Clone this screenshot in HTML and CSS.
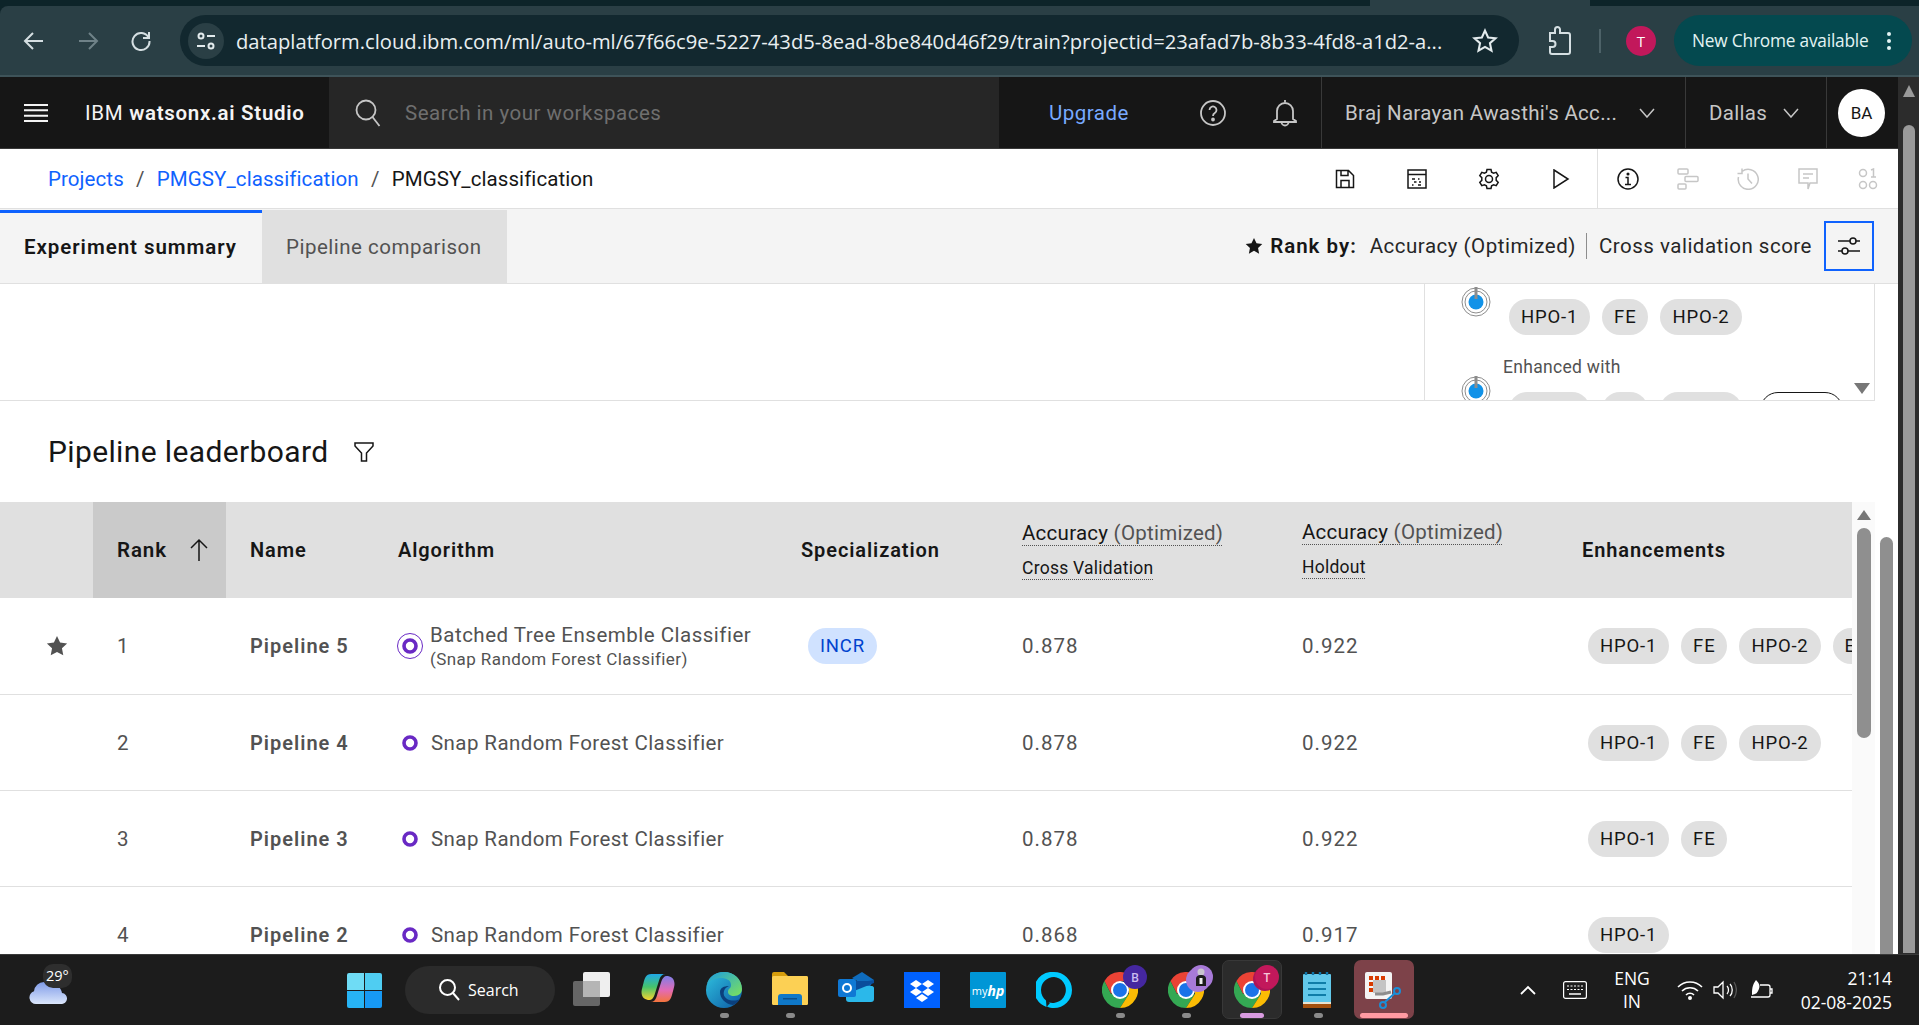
FILE: index.html
```html
<!DOCTYPE html>
<html lang="en">
<head>
    <meta charset="UTF-8">
    <meta name="viewport" content="width=device-width, initial-scale=1.0">
    <title>IBM watsonx.ai Studio - Pipeline leaderboard</title>
    <link rel="stylesheet" href="styles.css">
</head>
<body>

<svg class="defs" width="0" height="0">
    <defs>
        <symbol id="chrome" viewBox="0 0 36 36">
            <path fill="#ea4335" d="M2.4 9A18 18 0 0 1 33.6 9L18 9 9 22z"/>
            <path fill="#34a853" d="M2.4 9A18 18 0 0 0 18 36l9-14L9 22z"/>
            <path fill="#fbbc04" d="M33.6 9A18 18 0 0 1 18 36l9-14V9z"/>
            <circle cx="18" cy="18" r="9" fill="#fff"/>
            <circle cx="18" cy="18" r="7" fill="#1a73e8"/>
        </symbol>
        <symbol id="chip-star" viewBox="0 0 20 20">
            <path d="M10 1l2.8 5.9 6.4.8-4.7 4.4 1.2 6.4L10 15.4l-5.7 3.1 1.2-6.4L.8 7.7l6.4-.8z"/>
        </symbol>
        <symbol id="algo-dot" viewBox="0 0 18 18">
            <circle cx="9" cy="9" r="6" fill="none" stroke="#6929c4" stroke-width="3.6"/>
        </symbol>
        <symbol id="node" viewBox="0 0 30 32">
            <circle cx="15" cy="17" r="14" fill="none" stroke="#8d8d8d"/>
            <circle cx="15" cy="17" r="11" fill="none" stroke="#8d8d8d"/>
            <circle cx="15" cy="17" r="7.5" fill="#1192e8"/>
            <path d="M15 2v12" stroke="#8d8d8d" stroke-width="3"/>
        </symbol>
        <linearGradient id="edge-a" x1="0" y1="0" x2="1" y2="1">
            <stop offset="0" stop-color="#2fc2df"/>
            <stop offset="1" stop-color="#0c59a4"/>
        </linearGradient>
        <linearGradient id="edge-b" x1="0" y1="0" x2="1" y2="1">
            <stop offset="0" stop-color="#1b9de2"/>
            <stop offset="1" stop-color="#7de25a"/>
        </linearGradient>
        <linearGradient id="pilot-a" x1="0" y1="0" x2="0" y2="1">
            <stop offset="0" stop-color="#7f7fe8"/>
            <stop offset=".55" stop-color="#e36bb4"/>
            <stop offset="1" stop-color="#f4743c"/>
        </linearGradient>
        <linearGradient id="pilot-b" x1="0" y1="0" x2="0" y2="1">
            <stop offset="0" stop-color="#1fa8e8"/>
            <stop offset=".5" stop-color="#46c46b"/>
            <stop offset="1" stop-color="#f7d32f"/>
        </linearGradient>
        <linearGradient id="cloud-fill" x1="0" y1="0" x2="0" y2="1">
            <stop offset="0" stop-color="#7f9be8"/>
            <stop offset="1" stop-color="#dbe6fb"/>
        </linearGradient>
    </defs>
</svg>

<div class="browser-bar">
    <div class="tab-strip"><div class="tab-active"></div></div>
    <div class="toolbar">
        <svg class="tool-icon" width="22" height="22" viewBox="0 0 22 22" fill="none" stroke="#d5dfe2" stroke-width="2"><path d="M20 11H3M10 3l-8 8 8 8"/></svg>
        <svg class="tool-icon tool-fwd" width="22" height="22" viewBox="0 0 22 22" fill="none" stroke="#6f8288" stroke-width="2"><path d="M2 11h17M12 3l8 8-8 8"/></svg>
        <svg class="tool-icon tool-reload" width="22" height="22" viewBox="0 0 22 22" fill="none" stroke="#d5dfe2" stroke-width="2"><path d="M18.500 7.500A8.500 8.500 0 1 0 19.500 11M19 2v6h-6"/></svg>
        <div class="omnibox">
            <div class="site-info">
                <svg width="22" height="22" viewBox="0 0 22 22" fill="none" stroke="#e3ebed" stroke-width="2"><circle cx="6" cy="6" r="2.500"/><path d="M12 6h8M2 16h8"/><circle cx="16" cy="16" r="2.500"/></svg>
            </div>
            <span class="url">dataplatform.cloud.ibm.com/ml/auto-ml/67f66c9e-5227-43d5-8ead-8be840d46f29/train?projectid=23afad7b-8b33-4fd8-a1d2-a...</span>
            <svg class="url-star" width="26" height="26" viewBox="0 0 20 20" fill="none" stroke="#e3ebed" stroke-width="1.600"><path d="M10 2l2.400 5.300 5.700.6-4.300 3.800 1.200 5.700L10 14.500l-5 2.900 1.200-5.700L1.900 7.900l5.700-.6z"/></svg>
        </div>
        <svg class="ext-icon" width="26" height="30" viewBox="0 0 26 30" fill="none" stroke="#d5dfe2" stroke-width="2"><path d="M3 7h5V3.500a2.500 2.500 0 0 1 5 0V7h8a2 2 0 0 1 2 2v17a2 2 0 0 1-2 2H5a2 2 0 0 1-2-2v-5h2.500a3 3 0 0 0 0-6H3z"/></svg>
        <div class="tool-sep"></div>
        <div class="profile-dot">T</div>
        <div class="update-pill">
            <span>New Chrome available</span>
            <span class="update-dots"><i></i><i></i><i></i></span>
        </div>
    </div>
</div>

<div class="app">
    <div class="content">
        <header class="studio-head">
            <div class="head-brand">
                <svg width="24" height="18" viewBox="0 0 24 18" fill="none" stroke="#f4f4f4" stroke-width="2"><path d="M0 1h24M0 6.300h24M0 11.700h24M0 17h24"/></svg>
                <span class="brand-name">IBM <b>watsonx.ai Studio</b></span>
            </div>
            <div class="head-search">
                <svg width="26" height="28" viewBox="0 0 26 28" fill="none" stroke="#c6c6c6" stroke-width="1.800"><circle cx="11" cy="11" r="9.500"/><path d="M17.500 18l7 9"/></svg>
                <span>Search in your workspaces</span>
            </div>
            <div class="head-upgrade">Upgrade</div>
            <div class="head-icon">
                <svg width="26" height="26" viewBox="0 0 26 26" fill="none" stroke="#c6c6c6" stroke-width="1.800"><circle cx="13" cy="13" r="12"/><path d="M9.500 10a3.500 3.500 0 1 1 5.300 3c-1.200.7-1.800 1.300-1.800 3"/><circle cx="13" cy="19.500" r="1" fill="#c6c6c6"/></svg>
            </div>
            <div class="head-icon">
                <svg width="26" height="28" viewBox="0 0 26 28" fill="none" stroke="#c6c6c6" stroke-width="1.800"><path d="M13 1v2M5 20v-8a8 8 0 0 1 16 0v8l3 2v1H2v-1zM9.500 23a3.500 3.500 0 0 0 7 0"/></svg>
            </div>
            <div class="head-account">
                <span>Braj Narayan Awasthi's Acc...</span>
                <svg class="chev" width="16" height="10" viewBox="0 0 16 10" fill="none" stroke="#c6c6c6" stroke-width="1.500"><path d="M1 1l7 8 7-8"/></svg>
            </div>
            <div class="head-region">
                <span>Dallas</span>
                <svg class="chev" width="16" height="10" viewBox="0 0 16 10" fill="none" stroke="#c6c6c6" stroke-width="1.500"><path d="M1 1l7 8 7-8"/></svg>
            </div>
            <div class="head-user"><div class="user-avatar">BA</div></div>
        </header>

        <div class="crumb-bar">
            <nav class="crumbs">
                <a>Projects</a><span class="crumb-sep">/</span>
                <a>PMGSY_classification</a><span class="crumb-sep">/</span>
                <span>PMGSY_classification</span>
            </nav>
            <div class="crumb-actions">
                <div class="act">
                    <svg width="20" height="20" viewBox="0 0 20 20" fill="none" stroke="#161616" stroke-width="1.500"><path d="M1.500 1.500h12l5 5v12h-17zM6 1.500v5h7v-5M6 18.500v-7h8v7"/></svg>
                </div>
                <div class="act">
                    <svg width="20" height="20" viewBox="0 0 20 20" fill="none" stroke="#161616" stroke-width="1.500"><rect x="1" y="1" width="18" height="18"/><path d="M1 5.500h18M5 10h3M11 10h1.500M7 13h2.500M12 13h2M5 16h1.500M11 16h3"/></svg>
                </div>
                <div class="act">
                    <svg width="22" height="22" viewBox="0 0 22 22" fill="none" stroke="#161616" stroke-width="1.500"><circle cx="11" cy="11" r="3.500"/><path d="M9 1.500h4l.6 2.700 2 1 2.600-.9 2 3.400-2 1.900v2.800l2 1.900-2 3.400-2.600-.9-2 1L13 20.500H9l-.6-2.700-2-1-2.600.9-2-3.400 2-1.900V9.600l-2-1.900 2-3.400 2.600.9 2-1z"/></svg>
                </div>
                <div class="act">
                    <svg width="18" height="20" viewBox="0 0 18 20" fill="none" stroke="#161616" stroke-width="1.500"><path d="M2 1l14 9-14 9z"/></svg>
                </div>
                <div class="act-group">
                    <div class="act-small">
                        <svg width="22" height="22" viewBox="0 0 22 22" fill="none" stroke="#161616" stroke-width="1.500"><circle cx="11" cy="11" r="10"/><path d="M8 16.500h6M11 16.500V9.500H8.500"/><circle cx="11" cy="6" r=".8" fill="#161616"/></svg>
                    </div>
                    <div class="act-small act-off">
                        <svg width="22" height="22" viewBox="0 0 22 22" fill="none" stroke="#c6c6c6" stroke-width="1.500"><rect x="1" y="1" width="10" height="5" rx="1"/><rect x="8" y="8.500" width="13" height="5" rx="1"/><rect x="1" y="16" width="8" height="5" rx="1"/></svg>
                    </div>
                    <div class="act-small act-off">
                        <svg width="22" height="22" viewBox="0 0 22 22" fill="none" stroke="#c6c6c6" stroke-width="1.500"><path d="M5 3.500A10 10 0 1 1 1.500 9M5 .5v5H.5M11 5.500V11l4 4.500"/></svg>
                    </div>
                    <div class="act-small act-off">
                        <svg width="22" height="22" viewBox="0 0 22 22" fill="none" stroke="#c6c6c6" stroke-width="1.500"><path d="M2 1h18v14h-7l-2 6v-6H2zM6 6h10M6 10h6"/></svg>
                    </div>
                    <div class="act-small act-off">
                        <svg width="20" height="22" viewBox="0 0 20 22" fill="none" stroke="#c6c6c6" stroke-width="1.500"><circle cx="5" cy="5" r="3.500"/><circle cx="5" cy="17" r="3.500"/><circle cx="15" cy="17" r="3.500"/><path d="M13 2l2.500-1v8M13 9h5"/></svg>
                    </div>
                </div>
            </div>
        </div>

        <div class="tab-row">
            <div class="page-tab page-tab-on">Experiment summary</div>
            <div class="page-tab page-tab-off">Pipeline comparison</div>
            <div class="rank-by">
                <svg class="rank-star" width="18" height="18"><use href="#chip-star"/></svg>
                <b>Rank by:</b>
                <span class="rank-val">Accuracy (Optimized)</span>
                <span class="rank-val rank-val-cv">Cross validation score</span>
                <button class="rank-btn">
                    <svg width="24" height="22" viewBox="0 0 24 22" fill="none" stroke="#161616" stroke-width="1.500"><path d="M1 6h12M19 6h4M1 16h4M11 16h12"/><circle cx="16" cy="6" r="3"/><circle cx="8" cy="16" r="3"/></svg>
                </button>
            </div>
        </div>

        <section class="progress-area">
            <div class="progress-inner">
                <div class="progress-panel">
                    <div class="node-row">
                        <svg class="node-icon" width="30" height="32"><use href="#node"/></svg>
                        <div class="chip-list">
                            <span class="chip">HPO-1</span><span class="chip">FE</span><span class="chip">HPO-2</span>
                        </div>
                    </div>
                    <div class="node-label">Enhanced with</div>
                    <div class="node-row node-row-last">
                        <svg class="node-icon" width="30" height="32"><use href="#node"/></svg>
                        <div class="chip-list">
                            <span class="chip">HPO-1</span><span class="chip">FE</span><span class="chip">HPO-2</span><span class="chip chip-line">HPO-3</span>
                        </div>
                    </div>
                    <div class="panel-arrow"></div>
                </div>
            </div>
        </section>

        <section class="board">
            <div class="board-title">
                <h2>Pipeline leaderboard</h2>
                <svg width="20" height="22" viewBox="0 0 20 22" fill="none" stroke="#161616" stroke-width="1.500"><path d="M1 2h18v3l-6.500 7v8h-5v-8L1 5z"/></svg>
            </div>
            <div class="board-body">
                <div class="board-table">
                    <div class="tb-row tb-head">
                        <div class="cell cell-star"></div>
                        <div class="cell cell-rank cell-sorted">
                            <span>Rank</span>
                            <svg width="20" height="24" viewBox="0 0 20 24" fill="none" stroke="#161616" stroke-width="1.500"><path d="M10 23V2M2 10l8-8 8 8"/></svg>
                        </div>
                        <div class="cell">Name</div>
                        <div class="cell">Algorithm</div>
                        <div class="cell">Specialization</div>
                        <div class="cell cell-metric">
                            <div class="metric-main"><u>Accuracy <em>(Optimized)</em></u></div>
                            <div class="metric-sub"><u>Cross Validation</u></div>
                        </div>
                        <div class="cell cell-metric">
                            <div class="metric-main"><u>Accuracy <em>(Optimized)</em></u></div>
                            <div class="metric-sub"><u>Holdout</u></div>
                        </div>
                        <div class="cell">Enhancements</div>
                    </div>

                    <div class="tb-row tb-first">
                        <div class="cell cell-star"><svg width="22" height="22"><use href="#chip-star"/></svg></div>
                        <div class="cell cell-rank">1</div>
                        <div class="cell cell-name">Pipeline 5</div>
                        <div class="cell cell-algo">
                            <svg class="algo-ring" width="26" height="26" viewBox="0 0 26 26" fill="none" stroke="#6929c4"><circle cx="13" cy="13" r="12.500"/><circle cx="13" cy="13" r="6" stroke-width="3.600"/></svg>
                            <div class="algo-text">
                                <div>Batched Tree Ensemble Classifier</div>
                                <small>(Snap Random Forest Classifier)</small>
                            </div>
                        </div>
                        <div class="cell"><span class="chip chip-blue">INCR</span></div>
                        <div class="cell cell-num">0.878</div>
                        <div class="cell cell-num">0.922</div>
                        <div class="cell cell-chips"><span class="chip">HPO-1</span><span class="chip">FE</span><span class="chip">HPO-2</span><span class="chip">Ensemble</span></div>
                    </div>

                    <div class="tb-row">
                        <div class="cell cell-star"></div>
                        <div class="cell cell-rank">2</div>
                        <div class="cell cell-name">Pipeline 4</div>
                        <div class="cell cell-algo"><svg class="algo-dot" width="18" height="18"><use href="#algo-dot"/></svg><span>Snap Random Forest Classifier</span></div>
                        <div class="cell"></div>
                        <div class="cell cell-num">0.878</div>
                        <div class="cell cell-num">0.922</div>
                        <div class="cell cell-chips"><span class="chip">HPO-1</span><span class="chip">FE</span><span class="chip">HPO-2</span></div>
                    </div>

                    <div class="tb-row">
                        <div class="cell cell-star"></div>
                        <div class="cell cell-rank">3</div>
                        <div class="cell cell-name">Pipeline 3</div>
                        <div class="cell cell-algo"><svg class="algo-dot" width="18" height="18"><use href="#algo-dot"/></svg><span>Snap Random Forest Classifier</span></div>
                        <div class="cell"></div>
                        <div class="cell cell-num">0.878</div>
                        <div class="cell cell-num">0.922</div>
                        <div class="cell cell-chips"><span class="chip">HPO-1</span><span class="chip">FE</span></div>
                    </div>

                    <div class="tb-row">
                        <div class="cell cell-star"></div>
                        <div class="cell cell-rank">4</div>
                        <div class="cell cell-name">Pipeline 2</div>
                        <div class="cell cell-algo"><svg class="algo-dot" width="18" height="18"><use href="#algo-dot"/></svg><span>Snap Random Forest Classifier</span></div>
                        <div class="cell"></div>
                        <div class="cell cell-num">0.868</div>
                        <div class="cell cell-num">0.917</div>
                        <div class="cell cell-chips"><span class="chip">HPO-1</span></div>
                    </div>
                </div>
                <div class="table-scroll">
                    <div class="scroll-up"></div>
                    <div class="scroll-thumb"></div>
                </div>
                <div class="board-scroll"><div class="scroll-thumb"></div></div>
            </div>
        </section>
    </div>

    <div class="page-scroll">
        <div class="page-scroll-up"></div>
        <div class="page-scroll-thumb"></div>
    </div>
</div>

<footer class="taskbar">
    <div class="weather">
        <svg width="38" height="26" viewBox="0 0 38 26"><path fill="url(#cloud-fill)" d="M7 26a6.500 6.500 0 0 1-2-12.700A10 10 0 0 1 15 4c2 0 5 1 6 3 6-1 11 2 12 8a5.500 5.500 0 0 1-1 11z"/></svg>
        <span class="temp">29°</span>
    </div>
    <div class="win-logo"><i></i><i></i><i></i><i></i></div>
    <div class="task-search">
        <svg width="22" height="24" viewBox="0 0 22 24" fill="none" stroke="#fff" stroke-width="2"><circle cx="9.500" cy="9.500" r="7.500"/><path d="M15 15l6 7"/></svg>
        <span>Search</span>
    </div>
    <div class="task">
        <svg width="38" height="36" viewBox="0 0 38 36"><rect x="10" y="0" width="27" height="25" rx="2" fill="#efefef"/><rect x="0" y="9" width="27" height="25" rx="2" fill="#666"/><rect x="10" y="9" width="17" height="16" fill="#b5b5b5"/></svg>
    </div>
    <div class="task">
        <svg width="34" height="32" viewBox="0 0 33 32"><path fill="url(#pilot-b)" d="M10 2C4 2 3 7 2 11 1 15 0 18 0 20c0 6 4 8 8 8 2 0 4-2 5-5L18 7c1-3 3-5 6-5z"/><path fill="url(#pilot-a)" d="M23 30c6 0 7-5 8-9 1-4 2-7 2-9 0-6-4-8-8-8-2 0-4 2-5 5L15 25c-1 3-3 5-6 5z"/></svg>
    </div>
    <div class="task">
        <svg width="36" height="36" viewBox="0 0 36 36"><circle cx="18" cy="18" r="18" fill="url(#edge-a)"/><path fill="url(#edge-b)" d="M1 12C3 4 10 0 18 0c10 0 18 7 18 17 0 4-3 7-8 7-4 0-6-2-6-4 0-4 3-3 3-7C25 8 20 6 15 6 9 6 4 8 1 12z"/><path fill="#0b3f7c" d="M14 20c0 6 5 12 13 13 3-1 5-3 7-6-4 2-9 2-13 0-3-2-4-5-3-8 1-3 3-4 5-5-5 0-9 2-9 6z"/></svg>
        <i class="dot"></i>
    </div>
    <div class="task">
        <svg width="36" height="34" viewBox="0 0 36 34"><path fill="#d69d0c" d="M0 2a2 2 0 0 1 2-2h10l4 4h18a2 2 0 0 1 2 2v4H0z"/><rect y="4" width="36" height="29" rx="1.500" fill="#fcd054"/><path fill="#0f78c8" d="M6 33V25a3 3 0 0 1 3-3h18a3 3 0 0 1 3 3v8z"/><rect x="11" y="26" width="14" height="1.500" fill="#0a4f8c"/></svg>
        <i class="dot"></i>
    </div>
    <div class="task">
        <svg width="36" height="30" viewBox="0 0 36 30"><path fill="#0f6cbd" d="M14 6L24 0l12 8-5 8z"/><path fill="#2bb8ea" d="M8 14h26c1 0 2 1 2 2v11c0 2-1 3-3 3H11c-2 0-3-1-3-3z"/><path fill="#0a4d9c" d="M14 9l16 0 6-1v3l-20 8z"/><rect y="7" width="18" height="18" rx="2" fill="#0f78d4"/><circle cx="9" cy="16" r="4" fill="none" stroke="#fff" stroke-width="2"/></svg>
    </div>
    <div class="task">
        <svg width="36" height="36" viewBox="0 0 36 36"><rect width="36" height="36" fill="#0061fe"/><path fill="#fff" d="M12 8l6 4-6 4-6-4zM24 8l6 4-6 4-6-4zM12 16l6 4-6 4-6-4zM24 16l6 4-6 4-6-4zM18 22l6 4-6 4-6-4z"/></svg>
    </div>
    <div class="task">
        <div class="myhp">my<b>hp</b></div>
    </div>
    <div class="task">
        <svg width="36" height="36" viewBox="0 0 36 36"><path fill="#00caff" fill-rule="evenodd" d="M18 0a18 18 0 0 1 0 36c-2.500 0-5-.5-7-1.500l3-3.500c-.4-.2-1-.5-1.500-.8A13 13 0 1 0 18 5 13 13 0 0 0 5 18c0 4.500 2 8 5 10.500l.5 6.500A18 18 0 0 1 18 0z"/></svg>
    </div>
    <div class="task task-chrome">
        <svg width="36" height="36"><use href="#chrome"/></svg>
        <span class="profile-badge badge-b">B</span>
        <i class="dot"></i>
    </div>
    <div class="task task-chrome">
        <svg width="36" height="36"><use href="#chrome"/></svg>
        <span class="profile-badge badge-photo">
            <svg width="14" height="18" viewBox="0 0 14 18"><circle cx="7" cy="4" r="3.500" fill="#c9c4cf"/><path fill="#1d1d1d" d="M2 18V11c0-3 2-4 5-4s5 1 5 4v7z"/><rect x="5.500" y="10" width="3" height="6" fill="#eee"/></svg>
        </span>
        <i class="dot"></i>
    </div>
    <div class="task task-chrome task-open">
        <svg width="36" height="36"><use href="#chrome"/></svg>
        <span class="profile-badge badge-t">T</span>
        <i class="bar bar-pink"></i>
    </div>
    <div class="task">
        <svg width="30" height="36" viewBox="0 0 30 36"><rect y="2" width="28" height="30" rx="1" fill="#62c8ea"/><rect y="30" width="28" height="6" fill="#a4500e"/><rect y="30" width="28" height="2" fill="#e8e2d0"/><path d="M3 3V0M10 3V0M17 3V0M24 3V0" stroke="#1075a8" stroke-width="2.400"/><path d="M5 11h18M5 17h18M5 23h18" stroke="#0f7da8" stroke-width="2"/></svg>
        <i class="dot"></i>
    </div>
    <div class="task task-snip">
        <svg width="38" height="38" viewBox="0 0 38 38"><rect x="0" y="0" width="27" height="27" rx="2" fill="#f4f4f4"/><path fill="#d83b01" d="M4 4h4v4H4zM10 4h4v4h-4zM16 4h4v4h-4zM4 10h4v4H4zM4 16h4v4H4z"/><rect x="8" y="8" width="13" height="13" fill="#c4c4c4"/><path d="M10 22h8l8-2" stroke="#8d8d8d" stroke-width="3" fill="none"/><circle cx="32" cy="19" r="3" fill="none" stroke="#1a8fd8" stroke-width="2"/><circle cx="18" cy="33" r="3" fill="none" stroke="#1a8fd8" stroke-width="2"/><path d="M20 30l10-9" stroke="#1a8fd8" stroke-width="2"/></svg>
        <i class="bar bar-rose"></i>
    </div>

    <div class="tray">
        <svg class="tray-caret" width="16" height="10" viewBox="0 0 16 10" fill="none" stroke="#fff" stroke-width="1.800"><path d="M1 9l7-7 7 7"/></svg>
        <svg class="tray-keys" width="24" height="18" viewBox="0 0 24 18" fill="none" stroke="#fff" stroke-width="1.200"><rect x=".6" y=".6" width="22.800" height="16.800" rx="2"/><path d="M4 5h16M4 8.500h16" stroke-dasharray="2 1.500"/><path d="M6 13h12" stroke-width="1.500"/></svg>
        <div class="tray-lang"><div>ENG</div><div>IN</div></div>
        <svg class="tray-wifi" width="26" height="20" viewBox="0 0 26 20" fill="none" stroke="#fff" stroke-width="1.600"><path d="M1 7a17 17 0 0 1 24 0M5 11a11.500 11.500 0 0 1 16 0M9 15a5.500 5.500 0 0 1 8 0"/><circle cx="13" cy="18" r="1.200" fill="#fff"/></svg>
        <svg class="tray-sound" width="24" height="20" viewBox="0 0 24 20" fill="none" stroke="#fff" stroke-width="1.300"><path d="M1 7h4l5-5v16l-5-5H1zM14 6c2 2 2 6 0 8M17 4c3 3 3 9 0 12"/><path d="M21 2c3 5 3 11 0 16" stroke="#555"/></svg>
        <svg class="tray-batt" width="24" height="22" viewBox="0 0 24 22" fill="none" stroke="#fff" stroke-width="1.300"><path d="M11 6h8a2 2 0 0 1 2 2v8a2 2 0 0 1-2 2H2M21 10h2v4h-2"/><path fill="#fff" d="M7 1c3 3 5 6 2 11-1 2-2 3-6 4 0-5 0-10 4-15z" stroke="none"/></svg>
        <div class="tray-clock"><div>21:14</div><div>02-08-2025</div></div>
    </div>
</footer>

</body>
</html>
```

FILE: styles.css
```css
* {
    box-sizing: border-box;
}

html, body {
    margin: 0;
    height: 100%;
    overflow: hidden;
}

body {
    font-family: "Roboto", "Liberation Sans", sans-serif;
    font-size: 20px;
    color: #161616;
    background-color: #ffffff;
    display: flex;
    flex-direction: column;
    height: 1025px;
}

.defs {
    position: absolute;
}

/* browser chrome */
.browser-bar {
    height: 77px;
    flex: none;
    background-color: #0d2429;
    font-family: "Open Sans", "Noto Sans", sans-serif;
}

.tab-strip {
    height: 6px;
}

.tab-active {
    margin-left: 1370px;
    width: 220px;
    height: 6px;
    background-color: #2a3f45;
}

.toolbar {
    height: 71px;
    background-color: #2a3f45;
    border-bottom: 2px solid #3e5359;
    border-top-left-radius: 8px;
    display: flex;
    align-items: center;
}

.tool-icon {
    margin-left: 23px;
}

.tool-fwd {
    margin-left: 32px;
}

.tool-reload {
    margin-left: 31px;
}

.omnibox {
    margin-left: 28px;
    width: 1339px;
    height: 51px;
    background-color: #12282f;
    border-radius: 26px;
    display: flex;
    align-items: center;
    padding-left: 8px;
    color: #e9eff1;
}

.site-info {
    width: 36px;
    height: 36px;
    border-radius: 18px;
    background-color: #2a3f45;
    display: flex;
    align-items: center;
    justify-content: center;
}

.url {
    margin-left: 12px;
    width: 1210px;
    font-size: 20.200px;
    white-space: nowrap;
    overflow: hidden;
}

.url-star {
    margin-left: 26px;
    flex: none;
}

.ext-icon {
    margin-left: 28px;
}

.tool-sep {
    margin-left: 26px;
    width: 2px;
    height: 24px;
    background-color: #4d6268;
}

.profile-dot {
    margin-left: 25px;
    width: 30px;
    height: 30px;
    border-radius: 15px;
    background-color: #c2185b;
    color: #fff;
    font-size: 15px;
    display: flex;
    align-items: center;
    justify-content: center;
}

.update-pill {
    margin-left: 18px;
    width: 238px;
    height: 51px;
    border-radius: 26px;
    background-color: #04494f;
    color: #e3f4f4;
    font-size: 17.300px;
    letter-spacing: -.2px;
    display: flex;
    align-items: center;
    justify-content: space-between;
    padding: 0 21px 0 18px;
}

.update-dots {
    display: flex;
    flex-direction: column;
    gap: 3px;
}

.update-dots i {
    width: 4px;
    height: 4px;
    border-radius: 2px;
    background-color: #e3f4f4;
}

/* app area */
.app {
    flex: 1;
    min-height: 0;
    display: flex;
}

.content {
    width: 1898px;
    display: flex;
    flex-direction: column;
    overflow: hidden;
}

.studio-head {
    height: 72px;
    flex: none;
    background-color: #161616;
    border-bottom: 1px solid #393939;
    display: flex;
    align-items: stretch;
    color: #c6c6c6;
}

.head-brand {
    width: 329px;
    padding-left: 24px;
    display: flex;
    align-items: center;
    gap: 37px;
}

.brand-name {
    color: #f4f4f4;
    font-size: 20.500px;
    letter-spacing: .7px;
    white-space: nowrap;
}

.brand-name b {
    font-weight: 600;
}

.head-search {
    width: 670px;
    background-color: #262626;
    padding-left: 26px;
    display: flex;
    align-items: center;
    gap: 24px;
    color: #6f6f6f;
    font-size: 20.500px;
    letter-spacing: .5px;
}

.head-upgrade {
    width: 178px;
    padding-left: 50px;
    color: #78a9ff;
    display: flex;
    align-items: center;
    font-size: 20.500px;
    letter-spacing: .5px;
}

.head-icon {
    width: 72px;
    display: flex;
    align-items: center;
    justify-content: center;
}

.head-account, .head-region {
    display: flex;
    align-items: center;
    border-left: 1px solid #393939;
    padding-left: 23px;
    font-size: 20.500px;
    letter-spacing: .3px;
    white-space: nowrap;
}

.head-account {
    width: 364px;
}

.head-region {
    width: 141px;
}

.head-account .chev {
    margin-left: 22px;
}

.head-region .chev {
    margin-left: 16px;
}

.head-user {
    width: 72px;
    border-left: 1px solid #393939;
    display: flex;
    align-items: center;
    padding-left: 11px;
}

.user-avatar {
    width: 47px;
    height: 48px;
    border-radius: 50%;
    background-color: #ffffff;
    color: #161616;
    font-size: 17px;
    display: flex;
    align-items: center;
    justify-content: center;
}

.crumb-bar {
    height: 60px;
    flex: none;
    border-bottom: 1px solid #e0e0e0;
    display: flex;
    align-items: stretch;
    justify-content: space-between;
}

.crumbs {
    display: flex;
    align-items: center;
    padding-left: 48px;
    font-size: 20.500px;
    letter-spacing: .08px;
}

.crumbs a {
    color: #0f62fe;
}

.crumb-sep {
    width: 33px;
    text-align: center;
    color: #525252;
}

.crumb-actions {
    display: flex;
    align-items: stretch;
}

.act {
    width: 72px;
    display: flex;
    align-items: center;
    justify-content: center;
}

.act-group {
    display: flex;
    border-left: 1px solid #e0e0e0;
}

.act-small {
    width: 60px;
    display: flex;
    align-items: center;
    justify-content: center;
}

.tab-row {
    height: 75px;
    flex: none;
    background-color: #f4f4f4;
    border-bottom: 1px solid #e0e0e0;
    display: flex;
    align-items: stretch;
}

.page-tab {
    display: flex;
    align-items: center;
    font-size: 20.500px;
    margin-top: 1px;
}

.page-tab-on {
    width: 262px;
    padding: 0 0 3px 24px;
    border-top: 3px solid #0f62fe;
    font-weight: 600;
    letter-spacing: .95px;
}

.page-tab-off {
    width: 245px;
    padding-left: 24px;
    background-color: #e0e0e0;
    color: #525252;
    letter-spacing: .5px;
}

.rank-by {
    margin-left: auto;
    padding-right: 24px;
    display: flex;
    align-items: center;
    font-size: 20.500px;
    letter-spacing: .5px;
}

.rank-star {
    fill: #161616;
    margin-right: 7px;
}

.rank-by b {
    font-weight: 600;
    letter-spacing: 1px;
}

.rank-val {
    margin-left: 13px;
    color: #262626;
}

.rank-val-cv {
    margin-left: 10px;
    padding-left: 12px;
    border-left: 1px solid #8d8d8d;
    line-height: 26px;
}

.rank-btn {
    margin-left: 12px;
    width: 50px;
    height: 50px;
    background-color: #f4f4f4;
    border: 2px solid #0f62fe;
    padding: 0;
    display: flex;
    align-items: center;
    justify-content: center;
}

/* top panel with the pipeline map */
.progress-area {
    height: 117px;
    flex: none;
    padding-right: 23px;
}

.progress-inner {
    height: 100%;
    display: flex;
    justify-content: flex-end;
    border-bottom: 1px solid #e0e0e0;
}

.progress-panel {
    position: relative;
    width: 451px;
    overflow: hidden;
    border-left: 1px solid #e0e0e0;
    border-right: 1px solid #e0e0e0;
}

.node-row {
    display: flex;
    padding-left: 36px;
    height: 54px;
}

.node-icon {
    flex: none;
    margin-top: 1px;
}

.chip-list {
    display: flex;
    gap: 12px;
    margin-left: 18px;
    margin-top: 15px;
}

.node-label {
    margin-top: 17px;
    height: 24px;
    line-height: 24px;
    padding-left: 78px;
    font-size: 17.500px;
    letter-spacing: .3px;
    color: #525252;
}

.node-row-last {
    margin-top: -7px;
}

.node-row-last .node-icon {
    margin-top: 2px;
}

.node-row-last .chip-list {
    margin-top: 20px;
}

.panel-arrow {
    position: absolute;
    right: 4px;
    top: 99px;
    width: 0;
    height: 0;
    border-left: 8px solid transparent;
    border-right: 8px solid transparent;
    border-top: 11px solid #777;
}

.chip {
    display: inline-flex;
    align-items: center;
    justify-content: center;
    height: 36px;
    padding: 0 12px;
    border-radius: 18px;
    background-color: #e0e0e0;
    color: #161616;
    font-size: 18.500px;
    letter-spacing: .8px;
    white-space: nowrap;
}

.chip-line {
    background-color: #fff;
    border: 1px solid #161616;
    margin-left: 6px;
}

.chip-blue {
    background-color: #d0e2ff;
    color: #0043ce;
    margin-left: 7px;
}

/* leaderboard */
.board {
    flex: 1;
    min-height: 0;
    display: flex;
    flex-direction: column;
}

.board-title {
    height: 101px;
    flex: none;
    display: flex;
    align-items: center;
    padding-left: 48px;
    gap: 26px;
}

.board-title h2 {
    margin: 0;
    font-size: 30px;
    font-weight: 400;
    letter-spacing: .37px;
}

.board-body {
    flex: 1;
    min-height: 0;
    display: flex;
}

.board-table {
    width: 1852px;
    flex: none;
    overflow: hidden;
}

.tb-row {
    display: grid;
    grid-template-columns: 93px 133px 148px 403px 221px 280px 280px 294px;
    height: 96px;
    border-bottom: 1px solid #e0e0e0;
    color: #525252;
    width: 1852px;
}

.tb-first {
    height: 97px;
}

.tb-head {
    background-color: #e0e0e0;
    color: #161616;
    font-weight: 600;
    letter-spacing: .9px;
    border-bottom: 0;
}

.cell {
    display: flex;
    align-items: center;
    padding-left: 24px;
    min-width: 0;
    white-space: nowrap;
}

.cell-star {
    fill: #525252;
    padding-left: 46px;
}

.cell-sorted {
    background-color: #cacaca;
    gap: 22px;
}

.cell-metric {
    flex-direction: column;
    align-items: flex-start;
    justify-content: center;
    font-weight: 400;
    letter-spacing: .25px;
    padding-bottom: 2px;
}

.cell-metric + .cell-metric {
    padding-bottom: 4px;
}

.metric-main {
    font-size: 20.500px;
    line-height: 28px;
}

.metric-main em {
    font-style: normal;
    color: #525252;
}

.metric-sub {
    font-size: 17.500px;
    line-height: 24px;
    margin-top: 9px;
}

.cell-metric u {
    text-decoration: underline dotted #525252 1px;
    text-underline-offset: 5px;
}

.cell-name {
    font-weight: 600;
    letter-spacing: 1px;
}

.cell-num {
    font-size: 20.500px;
    letter-spacing: 1px;
}

.cell-rank {
    font-size: 20.500px;
}

.cell-algo {
    gap: 9px;
    font-size: 20.500px;
    letter-spacing: .42px;
}

.algo-ring {
    flex: none;
    margin-right: -2px;
    margin-left: -1px;
}

.algo-dot {
    flex: none;
    margin-left: 3px;
    margin-right: 3px;
}

.algo-text div {
    line-height: 25px;
    letter-spacing: .5px;
}

.algo-text small {
    display: block;
    font-size: 17px;
    line-height: 22px;
}

.cell-chips {
    gap: 12px;
    padding-left: 30px;
    overflow: hidden;
}

.table-scroll {
    width: 23px;
    flex: none;
    background-color: #fafafa;
    padding: 8px 4px 0 5px;
}

.scroll-up {
    margin: 0 auto 8px;
    width: 0;
    height: 0;
    border-left: 7px solid transparent;
    border-right: 7px solid transparent;
    border-bottom: 10px solid #777;
}

.scroll-thumb {
    background-color: #8f8f8f;
    border-radius: 7px 7px 0 0;
}

.table-scroll .scroll-thumb {
    height: 210px;
    border-radius: 7px;
}

.board-scroll {
    width: 23px;
    flex: none;
    padding: 35px 5px 0;
}

.board-scroll .scroll-thumb {
    height: 100%;
}

.page-scroll {
    width: 21px;
    flex: none;
    background-color: #2c2c2c;
    padding: 8px 4px 0 5px;
}

.page-scroll-up {
    margin: 0 auto 28px;
    width: 0;
    height: 0;
    border-left: 6px solid transparent;
    border-right: 6px solid transparent;
    border-bottom: 12px solid #9a9a9a;
}

.page-scroll-thumb {
    height: 828px;
    background-color: #9a9a9a;
    border-radius: 6px 6px 0 0;
}

/* windows taskbar */
.taskbar {
    height: 71px;
    flex: none;
    background-color: #1c1c1c;
    border-top: 1px solid #3a3a3a;
    display: flex;
    align-items: flex-start;
    color: #fff;
    font-family: "Open Sans", "Noto Sans", sans-serif;
}

.weather {
    width: 331px;
    position: relative;
    padding: 23px 0 0 29px;
}

.temp {
    position: absolute;
    left: 43px;
    top: 9px;
    padding: 0 3px;
    border-radius: 10px;
    background-color: #2e2e2e;
    font-size: 14.500px;
    line-height: 24px;
}

.win-logo {
    width: 35px;
    height: 35px;
    margin: 18px 16px 0;
    display: grid;
    grid-template-columns: 1fr 1fr;
    gap: 1px;
}

.win-logo i:nth-child(1) {
    background-color: #6fdcf5;
    border-top-left-radius: 2px;
}

.win-logo i:nth-child(2) {
    background-color: #4fcdf2;
    border-top-right-radius: 2px;
}

.win-logo i:nth-child(3) {
    background-color: #27b4f5;
    border-bottom-left-radius: 2px;
}

.win-logo i:nth-child(4) {
    background-color: #1799f4;
    border-bottom-right-radius: 2px;
}

.task-search {
    margin: 11px 4px 0 7px;
    width: 150px;
    height: 48px;
    border-radius: 24px;
    background-color: #2b2b2b;
    display: flex;
    align-items: center;
    padding-left: 33px;
    gap: 8px;
    font-size: 16px;
}

.task {
    width: 66px;
    height: 59px;
    margin-top: 5px;
    padding-top: 12px;
    display: flex;
    flex-direction: column;
    align-items: center;
    position: relative;
    flex: none;
}

.task svg {
    flex: none;
}

.dot, .bar {
    position: absolute;
    bottom: 1px;
    height: 5px;
    border-radius: 3px;
}

.dot {
    width: 9px;
    background-color: #8a8a8a;
}

.bar-pink {
    width: 24px;
    background-color: #d99be0;
}

.bar-rose {
    width: 48px;
    background-color: #ff9aa2;
}

.myhp {
    width: 36px;
    height: 36px;
    border-radius: 1px;
    background-color: #0096d6;
    color: #fff;
    font-size: 11px;
    display: flex;
    align-items: center;
    justify-content: center;
}

.myhp b {
    font-style: italic;
    font-size: 14px;
}

.task-open::before, .task-snip::before {
    content: "";
    position: absolute;
    left: 3px;
    right: 3px;
    top: 0;
    bottom: 0;
    border-radius: 7px;
}

.task-open::before {
    background-color: #2b2b2b;
    border: 1px solid #383838;
}

.task-snip::before {
    background-color: #7d4249;
}

.task-open > svg, .task-snip > svg {
    position: relative;
}

.profile-badge {
    position: absolute;
    left: 36px;
    top: 5px;
    width: 24px;
    height: 24px;
    border-radius: 12px;
    display: flex;
    align-items: center;
    justify-content: center;
    font-size: 12px;
    font-weight: 600;
}

.badge-b {
    background-color: #4527a0;
    color: #cbbdf0;
}

.badge-photo {
    background-color: #a87ad8;
    box-shadow: -3px 3px 0 #a87ad8;
}

.badge-t {
    background-color: #c2185b;
    color: #f7c6d8;
    box-shadow: -2px 2px 0 #ad1457;
}

.tray {
    margin-left: auto;
    display: flex;
    align-items: center;
    height: 70px;
    padding-right: 27px;
}

.tray-caret {
    margin-right: 27px;
}

.tray-keys {
    margin-right: 15px;
}

.tray-lang {
    width: 60px;
    text-align: center;
    font-size: 17.500px;
    line-height: 23px;
    margin-right: 15px;
}

.tray-wifi {
    margin-right: 10px;
}

.tray-sound {
    margin-right: 12px;
}

.tray-clock {
    margin-left: 19px;
    width: 100px;
    text-align: right;
    font-size: 17.500px;
    line-height: 24px;
    white-space: nowrap;
}
```
